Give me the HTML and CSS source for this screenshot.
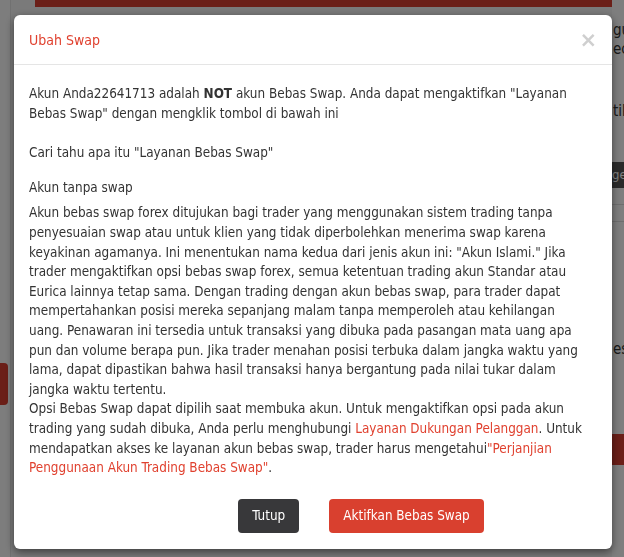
FILE: index.html
```html
<!DOCTYPE html>
<html>
<head>
	<meta charset="UTF-8">
	<title>Ubah Swap</title>
	<link rel="stylesheet" href="styles.css">
</head>
<body>
	<div class="page">
		<div class="side-left">
			<div class="red-block"></div>
		</div>
		<div class="main">
			<div class="topbar"></div>
		</div>
		<div class="side-right">
			<div class="frag first">gu</div>
			<div class="frag">ec</div>
			<div class="frag gap">tik</div>
			<div class="dark-bar">ge</div>
			<div class="line-row"></div>
			<div class="line-row"></div>
			<div class="frag es">es</div>
			<div class="red-bar"></div>
		</div>
	</div>

	<div class="overlay">
		<div class="modal">
			<div class="modal-header">
				<span class="modal-title">Ubah Swap</span>
				<span class="close">&times;</span>
			</div>
			<div class="modal-body">
				<p>Akun Anda22641713 adalah <b>NOT</b> akun Bebas Swap. Anda dapat mengaktifkan "Layanan Bebas Swap" dengan mengklik tombol di bawah ini</p>
				<p class="learn">Cari tahu apa itu "Layanan Bebas Swap"</p>
				<h4>Akun tanpa swap</h4>
				<p class="info">Akun bebas swap forex ditujukan bagi trader yang menggunakan sistem trading tanpa penyesuaian swap atau untuk klien yang tidak diperbolehkan menerima swap karena keyakinan agamanya. Ini menentukan nama kedua dari jenis akun ini: "Akun Islami." Jika trader mengaktifkan opsi bebas swap forex, semua ketentuan trading akun Standar atau Eurica lainnya tetap sama. Dengan trading dengan akun bebas swap, para trader dapat mempertahankan posisi mereka sepanjang malam tanpa memperoleh atau kehilangan uang. Penawaran ini tersedia untuk transaksi yang dibuka pada pasangan mata uang apa pun dan volume berapa pun. Jika trader menahan posisi terbuka dalam jangka waktu yang lama, dapat dipastikan bahwa hasil transaksi hanya bergantung pada nilai tukar dalam jangka waktu tertentu.</p>
				<p class="info">Opsi Bebas Swap dapat dipilih saat membuka akun. Untuk mengaktifkan opsi pada akun trading yang sudah dibuka, Anda perlu menghubungi <a href="#">Layanan Dukungan Pelanggan</a>. Untuk mendapatkan akses ke layanan akun bebas swap, trader harus mengetahui<a href="#">"Perjanjian Penggunaan Akun Trading Bebas Swap"</a>.</p>
			</div>
			<div class="modal-footer">
				<button class="btn btn-dark">Tutup</button>
				<button class="btn btn-red">Aktifkan Bebas Swap</button>
			</div>
		</div>
	</div>
</body>
</html>
```

FILE: styles.css
```css
html, body {
	margin : 0;
	height : 100%;
}
body {
	background-color : #f4f4f4;
	font-family : "DejaVu Sans Condensed", "DejaVu Sans", sans-serif;
	font-stretch : condensed;
	font-size : 13.4px;
	color : #333;
	overflow : hidden;
}

/* page behind the dialog */
.page {
	display : flex;
	height : 100%;
}
.side-left {
	width : 10px;
	border-right : 1px solid #e2e2e2;
	background-color : #fbfbfb;
	padding-top : 363px;
}
.red-block {
	width : 8px;
	height : 42px;
	background-color : #d63e30;
	border-radius : 0 4px 4px 0;
}
.main {
	flex : 1;
	padding-left : 24px;
}
.topbar {
	height : 7px;
	background-color : #d63e30;
}
.side-right {
	width : 12px;
	padding-top : 21px;
	background-color : #fdfdfd;
	overflow : hidden;
	white-space : nowrap;
	font-size : 15px;
	line-height : 19px;
}
.frag {
	padding-left : 1px;
}
.frag.gap {
	margin-top : 43px;
}
.dark-bar {
	margin-top : 41px;
	height : 26px;
	line-height : 26px;
	background-color : #555;
	color : #fff;
	font-size : 13px;
}
.line-row {
	height : 16px;
	border-bottom : 1px solid #ddd;
}
.frag.es {
	margin-top : 118px;
}
.red-bar {
	margin-top : 75px;
	height : 31px;
	background-color : #d63e30;
}

/* dialog */
.overlay {
	position : fixed;
	top : 0;
	left : 0;
	right : 0;
	bottom : 0;
	background : rgba(0, 0, 0, 0.5);
}
.modal {
	width : 598px;
	margin : 15px 0 0 14px;
	background-color : #fff;
	border-radius : 6px;
	box-shadow : 0 3px 9px rgba(0, 0, 0, 0.5);
}
.modal-header {
	display : flex;
	justify-content : space-between;
	align-items : center;
	height : 50px;
	padding : 0 15px;
	border-bottom : 1px solid #e5e5e5;
	box-sizing : border-box;
}
.modal-title {
	color : #e0412f;
	font-size : 14px;
}
.close {
	color : #cfcfcf;
	font-size : 21px;
	font-weight : bold;
	font-family : "DejaVu Sans", sans-serif;
	font-stretch : normal;
	margin-right : 0;
}
.modal-body {
	padding : 19px 15px 0 15px;
	line-height : 19.6px;
}
.modal-body p {
	margin : 0 0 19.6px 0;
}
.modal-body p.learn {
	margin-bottom : 16px;
}
.modal-body h4 {
	margin : 0 0 5px 0;
	font-size : 13.4px;
	font-weight : normal;
	line-height : 20px;
}
.modal-body p.info {
	margin-bottom : 0;
	max-width : 553px;
}
.modal-body p.info + p.info {
	max-width : none;
}
a {
	color : #e0412f;
	text-decoration : none;
}
.modal-footer {
	display : flex;
	justify-content : center;
	gap : 30px;
	padding : 21px 0 16px 96px;
}
.btn {
	height : 34px;
	border : none;
	border-radius : 4px;
	color : #fff;
	font-family : inherit;
	font-size : 13.4px;
	padding : 0 14px;
}
.btn-dark {
	background-color : #38383a;
}
.btn-red {
	background-color : #d9402f;
}
```
